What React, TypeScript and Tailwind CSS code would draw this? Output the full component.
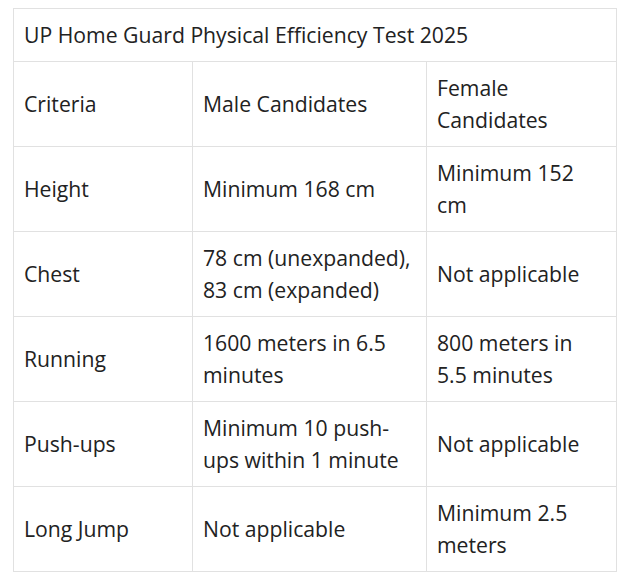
const rows: [string, string, string][] = [
  ["Criteria", "Male Candidates", "Female Candidates"],
  ["Height", "Minimum 168 cm", "Minimum 152 cm"],
  ["Chest", "78 cm (unexpanded), 83 cm (expanded)", "Not applicable"],
  ["Running", "1600 meters in 6.5 minutes", "800 meters in 5.5 minutes"],
  ["Push-ups", "Minimum 10 push-ups within 1 minute", "Not applicable"],
  ["Long Jump", "Not applicable", "Minimum 2.5 meters"],
];

const cell = "border border-[#e1e1e1] px-[10px] py-[10px] align-middle";

export default function App() {
  return (
    <div className="bg-white min-h-screen pl-[13px] pt-[8px] font-['Open_Sans',sans-serif] text-[21.2px] leading-[32px] text-[#222]">
      <table className="border-collapse table-fixed w-[603px]">
        <colgroup>
          <col className="w-[179px]" />
          <col className="w-[234px]" />
          <col className="w-[190px]" />
        </colgroup>
        <tbody>
          <tr className="h-[53px]">
            <td colSpan={3} className={cell}>
              UP Home Guard Physical Efficiency Test 2025
            </td>
          </tr>
          {rows.map((r) => (
            <tr key={r[0]} className="h-[84.8px]">
              <td className={cell}>{r[0]}</td>
              <td className={cell}>{r[1]}</td>
              <td className={cell}>{r[2]}</td>
            </tr>
          ))}
        </tbody>
      </table>
    </div>
  );
}
